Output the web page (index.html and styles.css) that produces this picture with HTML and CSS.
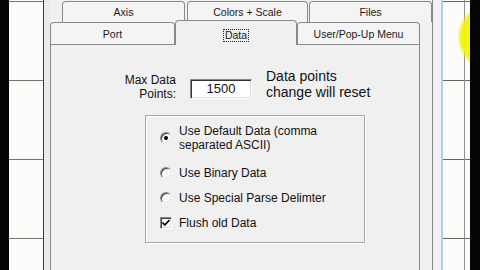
FILE: index.html
```html
<!DOCTYPE html>
<html>
<head>
<meta charset="utf-8">
<link rel="stylesheet" href="styles.css">
</head>
<body>
  <div class="black-l"></div>
  <div class="grid-l"></div>
  <div class="gap-l"></div>
  <div class="tabs-wrap">
    <div class="row-back">
      <div class="tab back axis">Axis</div>
      <div class="tab back colors">Colors + Scale</div>
      <div class="tab back files">Files</div>
    </div>
    <div class="row-front">
      <div class="tab front port">Port</div>
      <div class="tab front sel"><span class="focus">Data</span></div>
      <div class="tab front user">User/Pop-Up Menu</div>
    </div>
    <div class="panel">
      <div class="datarow">
        <div class="lbl">Max Data<br>Points:</div>
        <div class="inp">1500</div>
        <div class="note">Data points<br>change will reset</div>
      </div>
      <div class="group">
        <div class="item first"><span class="radio on"></span><span class="txt">Use Default Data (comma<br>separated ASCII)</span></div>
        <div class="item"><span class="radio"></span><span class="txt">Use Binary Data</span></div>
        <div class="item"><span class="radio"></span><span class="txt">Use Special Parse Delimter</span></div>
        <div class="item"><span class="check"><svg width="10" height="10" viewBox="0 0 10 10"><polyline points="1.5,4.5 3.8,7 8.5,2" fill="none" stroke="#000" stroke-width="1.8"/></svg></span><span class="txt">Flush old Data</span></div>
      </div>
    </div>
  </div>
  <div class="gap-r"></div>
  <div class="blue"></div>
  <div class="grid-r"><div class="spot"></div></div>
  <div class="black-r"></div>
</body>
</html>
```
FILE: styles.css
```css
html, body {
  margin: 0;
  padding: 0;
}
body {
  width: 480px;
  height: 270px;
  overflow: hidden;
  display: flex;
  position: relative;
  background: #f0f0f0;
  font-family: "Liberation Sans", Arial, sans-serif;
  color: #111;
}
.black-l {
  width: 9px;
  background: #050505;
}
.grid-l {
  width: 34px;
  border-right: 1px solid #3a3a3a;
  background-color: #fcfdfb;
  background-image: repeating-linear-gradient(to bottom, transparent 0 1px, #6f786f 1px 2px, transparent 2px 79px);
}
.gap-l {
  width: 6px;
  background: #ebebeb;
}
.tabs-wrap {
  width: 382px;
  border-right: 1px solid #868686;
  display: flex;
  flex-direction: column;
}
.row-back {
  height: 22px;
  display: flex;
  padding-left: 12px;
}
.tab {
  box-sizing: border-box;
  border: 1px solid #868a90;
  border-bottom: none;
  border-radius: 4px 4px 0 0;
  background: #f4f4f4;
  font-size: 10.5px;
  display: flex;
  justify-content: center;
  align-items: center;
  color: #1a1a1a;
}
.back {
  height: 21px;
  margin-top: 1px;
  padding-bottom: 1px;
}
.axis { width: 123px; margin-right: 2px; }
.colors { width: 121px; margin-right: 1px; }
.files { width: 123px; }
.row-front {
  height: 22px;
  display: flex;
  align-items: flex-start;
}
.front {
  height: 22px;
  padding-top: 1px;
}
.port { width: 125px; }
.user { width: 123px; }
.sel {
  width: 122px;
  height: 25px;
  margin-top: -2px;
  margin-bottom: -1px;
  position: relative;
  z-index: 1;
  background: #f0f0f0;
  padding-top: 4px;
}
.focus {
  border: 1px dotted #222;
  padding: 0 1px;
  line-height: 11px;
}
.panel {
  width: 370px;
  flex: 1;
  box-sizing: border-box;
  border: 1px solid #868a90;
  border-bottom: none;
  background: #f0f0f0;
}
.datarow {
  display: flex;
  align-items: flex-start;
  margin-top: 23px;
  padding-left: 50px;
}
.lbl {
  width: 75px;
  text-align: right;
  font-size: 12px;
  line-height: 14px;
  margin-top: 5px;
}
.inp {
  box-sizing: border-box;
  width: 62px;
  height: 20px;
  margin-top: 11px;
  margin-left: 14px;
  background: #fff;
  border: 1px solid;
  border-color: #8a8a8a #fff #fff #8a8a8a;
  box-shadow: inset 1px 1px 0 #333, inset -1px -1px 0 #dcdcdc;
  font-size: 13px;
  line-height: 18px;
  text-align: center;
}
.note {
  margin-left: 14px;
  font-size: 14px;
  line-height: 16px;
}
.group {
  box-sizing: border-box;
  width: 220px;
  height: 128px;
  margin-top: 14px;
  margin-left: 94px;
  border: 1px solid #a4a4a4;
  box-shadow: inset 1px 1px 0 #fff, 1px 1px 0 #fff;
  padding: 8px 0 0 14px;
  display: flex;
  flex-direction: column;
  gap: 11px;
}
.item {
  display: flex;
  align-items: center;
  font-size: 12px;
  line-height: 14px;
}
.item.first {
  margin-bottom: 3px;
}
.radio {
  box-sizing: border-box;
  width: 12px;
  height: 12px;
  border-radius: 50%;
  border: 1px solid;
  border-color: #8a8a8a #f4f4f4 #f4f4f4 #8a8a8a;
  background: #fff;
  box-shadow: inset 1px 1px 0 #404040, inset -1px -1px 0 #e4e4e4;
  margin-right: 7px;
  flex: none;
  display: flex;
  align-items: center;
  justify-content: center;
}
.radio.on::after {
  content: "";
  width: 4px;
  height: 4px;
  border-radius: 50%;
  background: #000;
}
.check {
  box-sizing: border-box;
  width: 12px;
  height: 12px;
  border: 1px solid;
  border-color: #8a8a8a #fff #fff #8a8a8a;
  background: #fff;
  box-shadow: inset 1px 1px 0 #404040, inset -1px -1px 0 #dedede;
  margin-right: 7px;
  flex: none;
  display: flex;
  align-items: center;
  justify-content: center;
}
.check svg {
  display: block;
}
.gap-r {
  width: 8px;
  background: #f2f0f2;
}
.blue {
  width: 2px;
  background: #a6d4e4;
}
.grid-r {
  width: 27px;
  position: relative;
  overflow: hidden;
  background-color: #fcfdfb;
  background-image:
    linear-gradient(to right, transparent 21px, #8a948a 21px 22px, transparent 22px),
    repeating-linear-gradient(to bottom, transparent 0 1px, #5f685f 1px 2px, transparent 2px 79px);
}
.spot {
  position: absolute;
  left: 14px;
  top: 2px;
  width: 70px;
  height: 70px;
  border-radius: 50%;
  background: radial-gradient(circle closest-side, rgba(244,244,0,0.95) 88%, rgba(244,244,0,0) 100%);
}
.black-r {
  width: 10px;
  background: #050505;
}
```
